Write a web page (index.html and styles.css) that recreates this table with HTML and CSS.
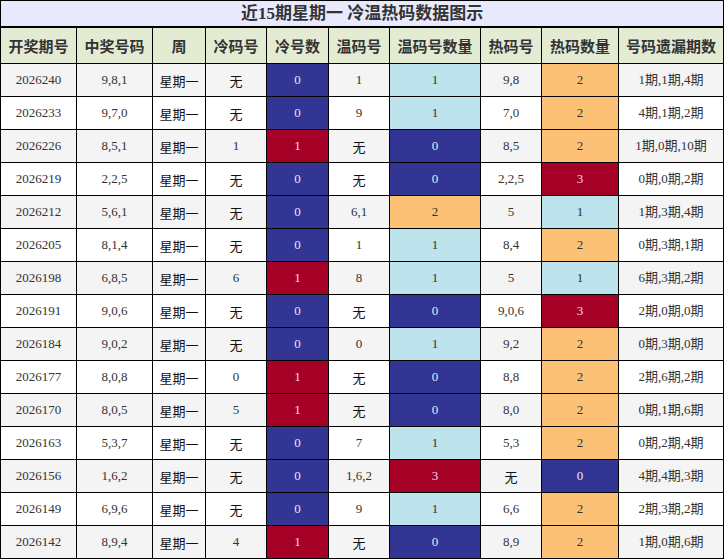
FILE: index.html
```html
<!DOCTYPE html>
<html lang="zh">
<head>
<meta charset="utf-8">
<title>近15期星期一 冷温热码数据图示</title>
<link rel="stylesheet" href="styles.css">
</head>
<body>
<table class="chart">
<colgroup>
<col class="c1"><col class="c2"><col class="c3"><col class="c4"><col class="c5"><col class="c6"><col class="c7"><col class="c8"><col class="c9"><col class="c10">
</colgroup>
<thead>
<tr class="title-row"><th colspan="10">近15期星期一 冷温热码数据图示</th></tr>
<tr class="head-row"><th>开奖期号</th><th>中奖号码</th><th>周</th><th>冷码号</th><th>冷号数</th><th>温码号</th><th>温码号数量</th><th>热码号</th><th>热码数量</th><th>号码遗漏期数</th></tr>
</thead>
<tbody>
<tr><td>2026240</td><td>9,8,1</td><td class="cjk">星期一</td><td class="cjk">无</td><td class="blue">0</td><td>1</td><td class="lb">1</td><td>9,8</td><td class="or">2</td><td>1期,1期,4期</td></tr>
<tr><td>2026233</td><td>9,7,0</td><td class="cjk">星期一</td><td class="cjk">无</td><td class="blue">0</td><td>9</td><td class="lb">1</td><td>7,0</td><td class="or">2</td><td>4期,1期,2期</td></tr>
<tr><td>2026226</td><td>8,5,1</td><td class="cjk">星期一</td><td>1</td><td class="red">1</td><td class="cjk">无</td><td class="blue">0</td><td>8,5</td><td class="or">2</td><td>1期,0期,10期</td></tr>
<tr><td>2026219</td><td>2,2,5</td><td class="cjk">星期一</td><td class="cjk">无</td><td class="blue">0</td><td class="cjk">无</td><td class="blue">0</td><td>2,2,5</td><td class="red">3</td><td>0期,0期,2期</td></tr>
<tr><td>2026212</td><td>5,6,1</td><td class="cjk">星期一</td><td class="cjk">无</td><td class="blue">0</td><td>6,1</td><td class="or">2</td><td>5</td><td class="lb">1</td><td>1期,3期,4期</td></tr>
<tr><td>2026205</td><td>8,1,4</td><td class="cjk">星期一</td><td class="cjk">无</td><td class="blue">0</td><td>1</td><td class="lb">1</td><td>8,4</td><td class="or">2</td><td>0期,3期,1期</td></tr>
<tr><td>2026198</td><td>6,8,5</td><td class="cjk">星期一</td><td>6</td><td class="red">1</td><td>8</td><td class="lb">1</td><td>5</td><td class="lb">1</td><td>6期,3期,2期</td></tr>
<tr><td>2026191</td><td>9,0,6</td><td class="cjk">星期一</td><td class="cjk">无</td><td class="blue">0</td><td class="cjk">无</td><td class="blue">0</td><td>9,0,6</td><td class="red">3</td><td>2期,0期,0期</td></tr>
<tr><td>2026184</td><td>9,0,2</td><td class="cjk">星期一</td><td class="cjk">无</td><td class="blue">0</td><td>0</td><td class="lb">1</td><td>9,2</td><td class="or">2</td><td>0期,3期,0期</td></tr>
<tr><td>2026177</td><td>8,0,8</td><td class="cjk">星期一</td><td>0</td><td class="red">1</td><td class="cjk">无</td><td class="blue">0</td><td>8,8</td><td class="or">2</td><td>2期,6期,2期</td></tr>
<tr><td>2026170</td><td>8,0,5</td><td class="cjk">星期一</td><td>5</td><td class="red">1</td><td class="cjk">无</td><td class="blue">0</td><td>8,0</td><td class="or">2</td><td>0期,1期,6期</td></tr>
<tr><td>2026163</td><td>5,3,7</td><td class="cjk">星期一</td><td class="cjk">无</td><td class="blue">0</td><td>7</td><td class="lb">1</td><td>5,3</td><td class="or">2</td><td>0期,2期,4期</td></tr>
<tr><td>2026156</td><td>1,6,2</td><td class="cjk">星期一</td><td class="cjk">无</td><td class="blue">0</td><td>1,6,2</td><td class="red">3</td><td class="cjk">无</td><td class="blue">0</td><td>4期,4期,3期</td></tr>
<tr><td>2026149</td><td>6,9,6</td><td class="cjk">星期一</td><td class="cjk">无</td><td class="blue">0</td><td>9</td><td class="lb">1</td><td>6,6</td><td class="or">2</td><td>2期,3期,2期</td></tr>
<tr><td>2026142</td><td>8,9,4</td><td class="cjk">星期一</td><td>4</td><td class="red">1</td><td class="cjk">无</td><td class="blue">0</td><td>8,9</td><td class="or">2</td><td>1期,0期,6期</td></tr>
</tbody>
</table>
</body>
</html>
```

FILE: styles.css
```css
html, body {
  margin: 0;
  padding: 0;
  background: #ffffff;
}
.chart {
  border-collapse: collapse;
  table-layout: fixed;
  width: 723px;
  font-family: "Liberation Serif", "Noto Sans CJK SC", serif;
  color: #333333;
  border: 1px solid #000;
}
.c1 { width: 76px; }
.c2 { width: 76px; }
.c3 { width: 53px; }
.c4 { width: 61px; }
.c5 { width: 62px; }
.c6 { width: 61px; }
.c7 { width: 91px; }
.c8 { width: 61px; }
.c9 { width: 77px; }
.c10 { width: 105px; }

.chart th, .chart td {
  border: 1px solid #000;
  text-align: center;
  padding: 0;
  overflow: hidden;
  white-space: nowrap;
}
.title-row th {
  height: 25px;
  background: #e8e9fd;
  font-size: 17px;
  font-weight: bold;
  color: #333;
  border-bottom: 2px solid #000;
  line-height: 25px;
}
.head-row th {
  height: 35px;
  background: #e3ecd3;
  font-size: 15px;
  font-weight: bold;
  color: #333;
}
.chart td {
  height: 32px;
  font-size: 13px;
  line-height: 16px;
}
.chart tbody tr:nth-child(odd) td {
  background: #f4f4f4;
}
.chart tbody tr:nth-child(even) td {
  background: #ffffff;
}
.chart td.cjk {
  font-size: 13px;
  color: #111;
  padding-top: 4px;
  height: 28px;
}
.chart tbody tr td.blue {
  background: #333594;
  color: #e8e8f0;
}
.chart tbody tr td.red {
  background: #a50026;
  color: #f2dde2;
}
.chart tbody tr td.lb {
  background: #bde3ec;
}
.chart tbody tr td.or {
  background: #fdc175;
}
```
